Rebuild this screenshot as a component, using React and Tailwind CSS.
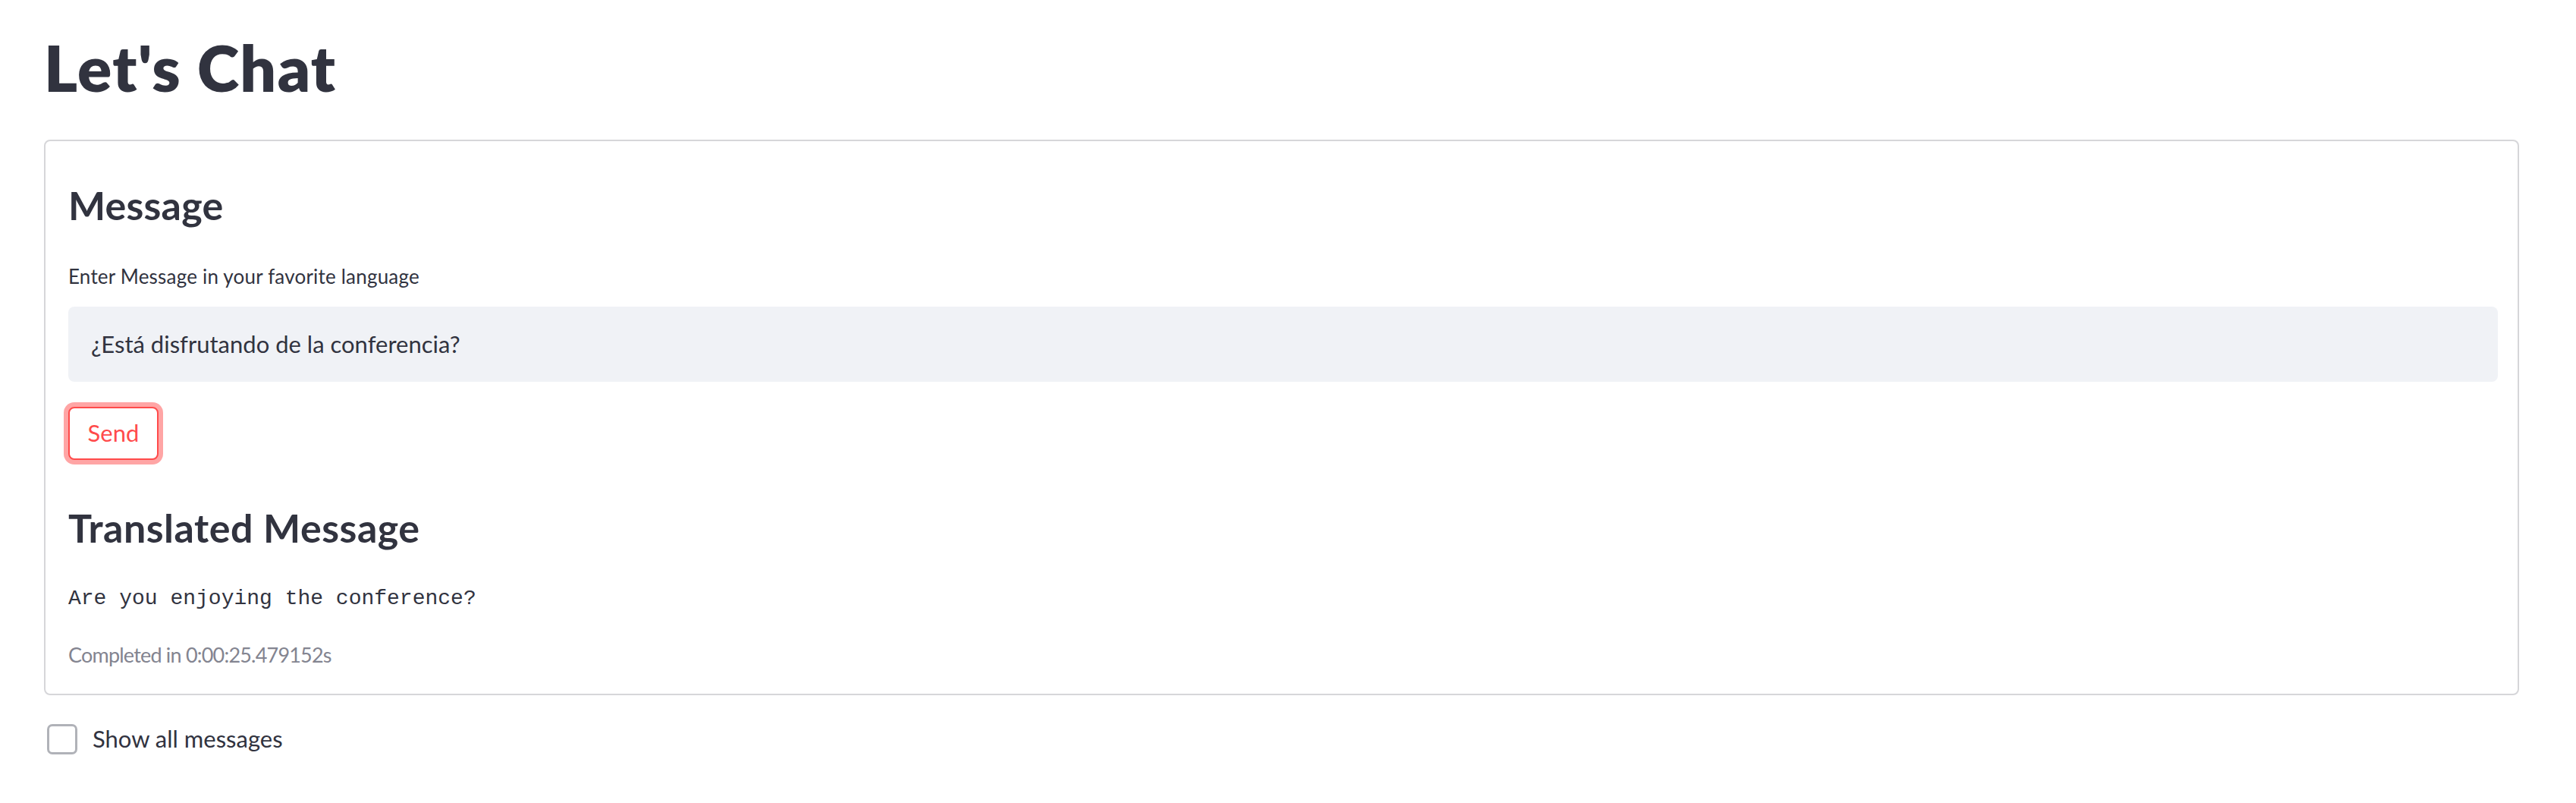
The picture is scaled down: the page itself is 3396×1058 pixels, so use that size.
export default function App() {
  return (
    <div className="min-h-screen w-full bg-white font-['Lato',sans-serif] text-[#31333f] pl-[58px]">
      <h1 className="mt-[39px] h-[101px] text-[84px] font-extrabold leading-[1.2] tracking-[1.4px]">Let's Chat</h1>
      <div className="mt-[44px] w-[3263px] rounded-[8px] border-2 border-[#d6d6d9] pl-[30px] pr-[26px] pt-[30px] pb-[30px]">
        <h3 className="mt-[23px] h-[62px] text-[52px] font-bold leading-[1.2] tracking-[0.2px]">Message</h3>
        <label className="mt-[48px] block h-[31px] text-[26px] leading-[1.2] tracking-[0.2px]">Enter Message in your favorite language</label>
        <div className="mt-[24px] flex h-[99px] w-full items-center rounded-[8px] bg-[#f0f2f6] pl-[30px] text-[31px] leading-[1.2]">
          ¿Está disfrutando de la conferencia?
        </div>
        <button className="mt-[33px] flex h-[70px] w-[119px] items-center justify-center rounded-[8px] border-2 border-[#ff4b4b] bg-white text-[31px] leading-[1.2] text-[#ff4b4b] shadow-[0_0_0_6px_rgba(255,75,75,0.5)]">
          Send
        </button>
        <h3 className="mt-[58px] h-[62px] text-[52px] font-bold leading-[1.2] tracking-[0.5px]">Translated Message</h3>
        <div className="mt-[46px] h-[34px] font-['Liberation_Mono',monospace] text-[28px] leading-[1.2] text-[#31333f]">
          Are you enjoying the conference?
        </div>
        <div className="mt-[41px] mb-[5px] h-[32px] text-[27px] leading-[1.2] tracking-[-0.8px] text-[#838490]">Completed in 0:00:25.479152s</div>
      </div>
      <div className="mt-[38px] flex items-center pl-[4px]">
        <div className="h-[40px] w-[40px] rounded-[7px] border-[3px] border-[#b0b2b8] bg-white" />
        <span className="ml-[20px] text-[31px] leading-[1.2]">Show all messages</span>
      </div>
    </div>
  );
}
